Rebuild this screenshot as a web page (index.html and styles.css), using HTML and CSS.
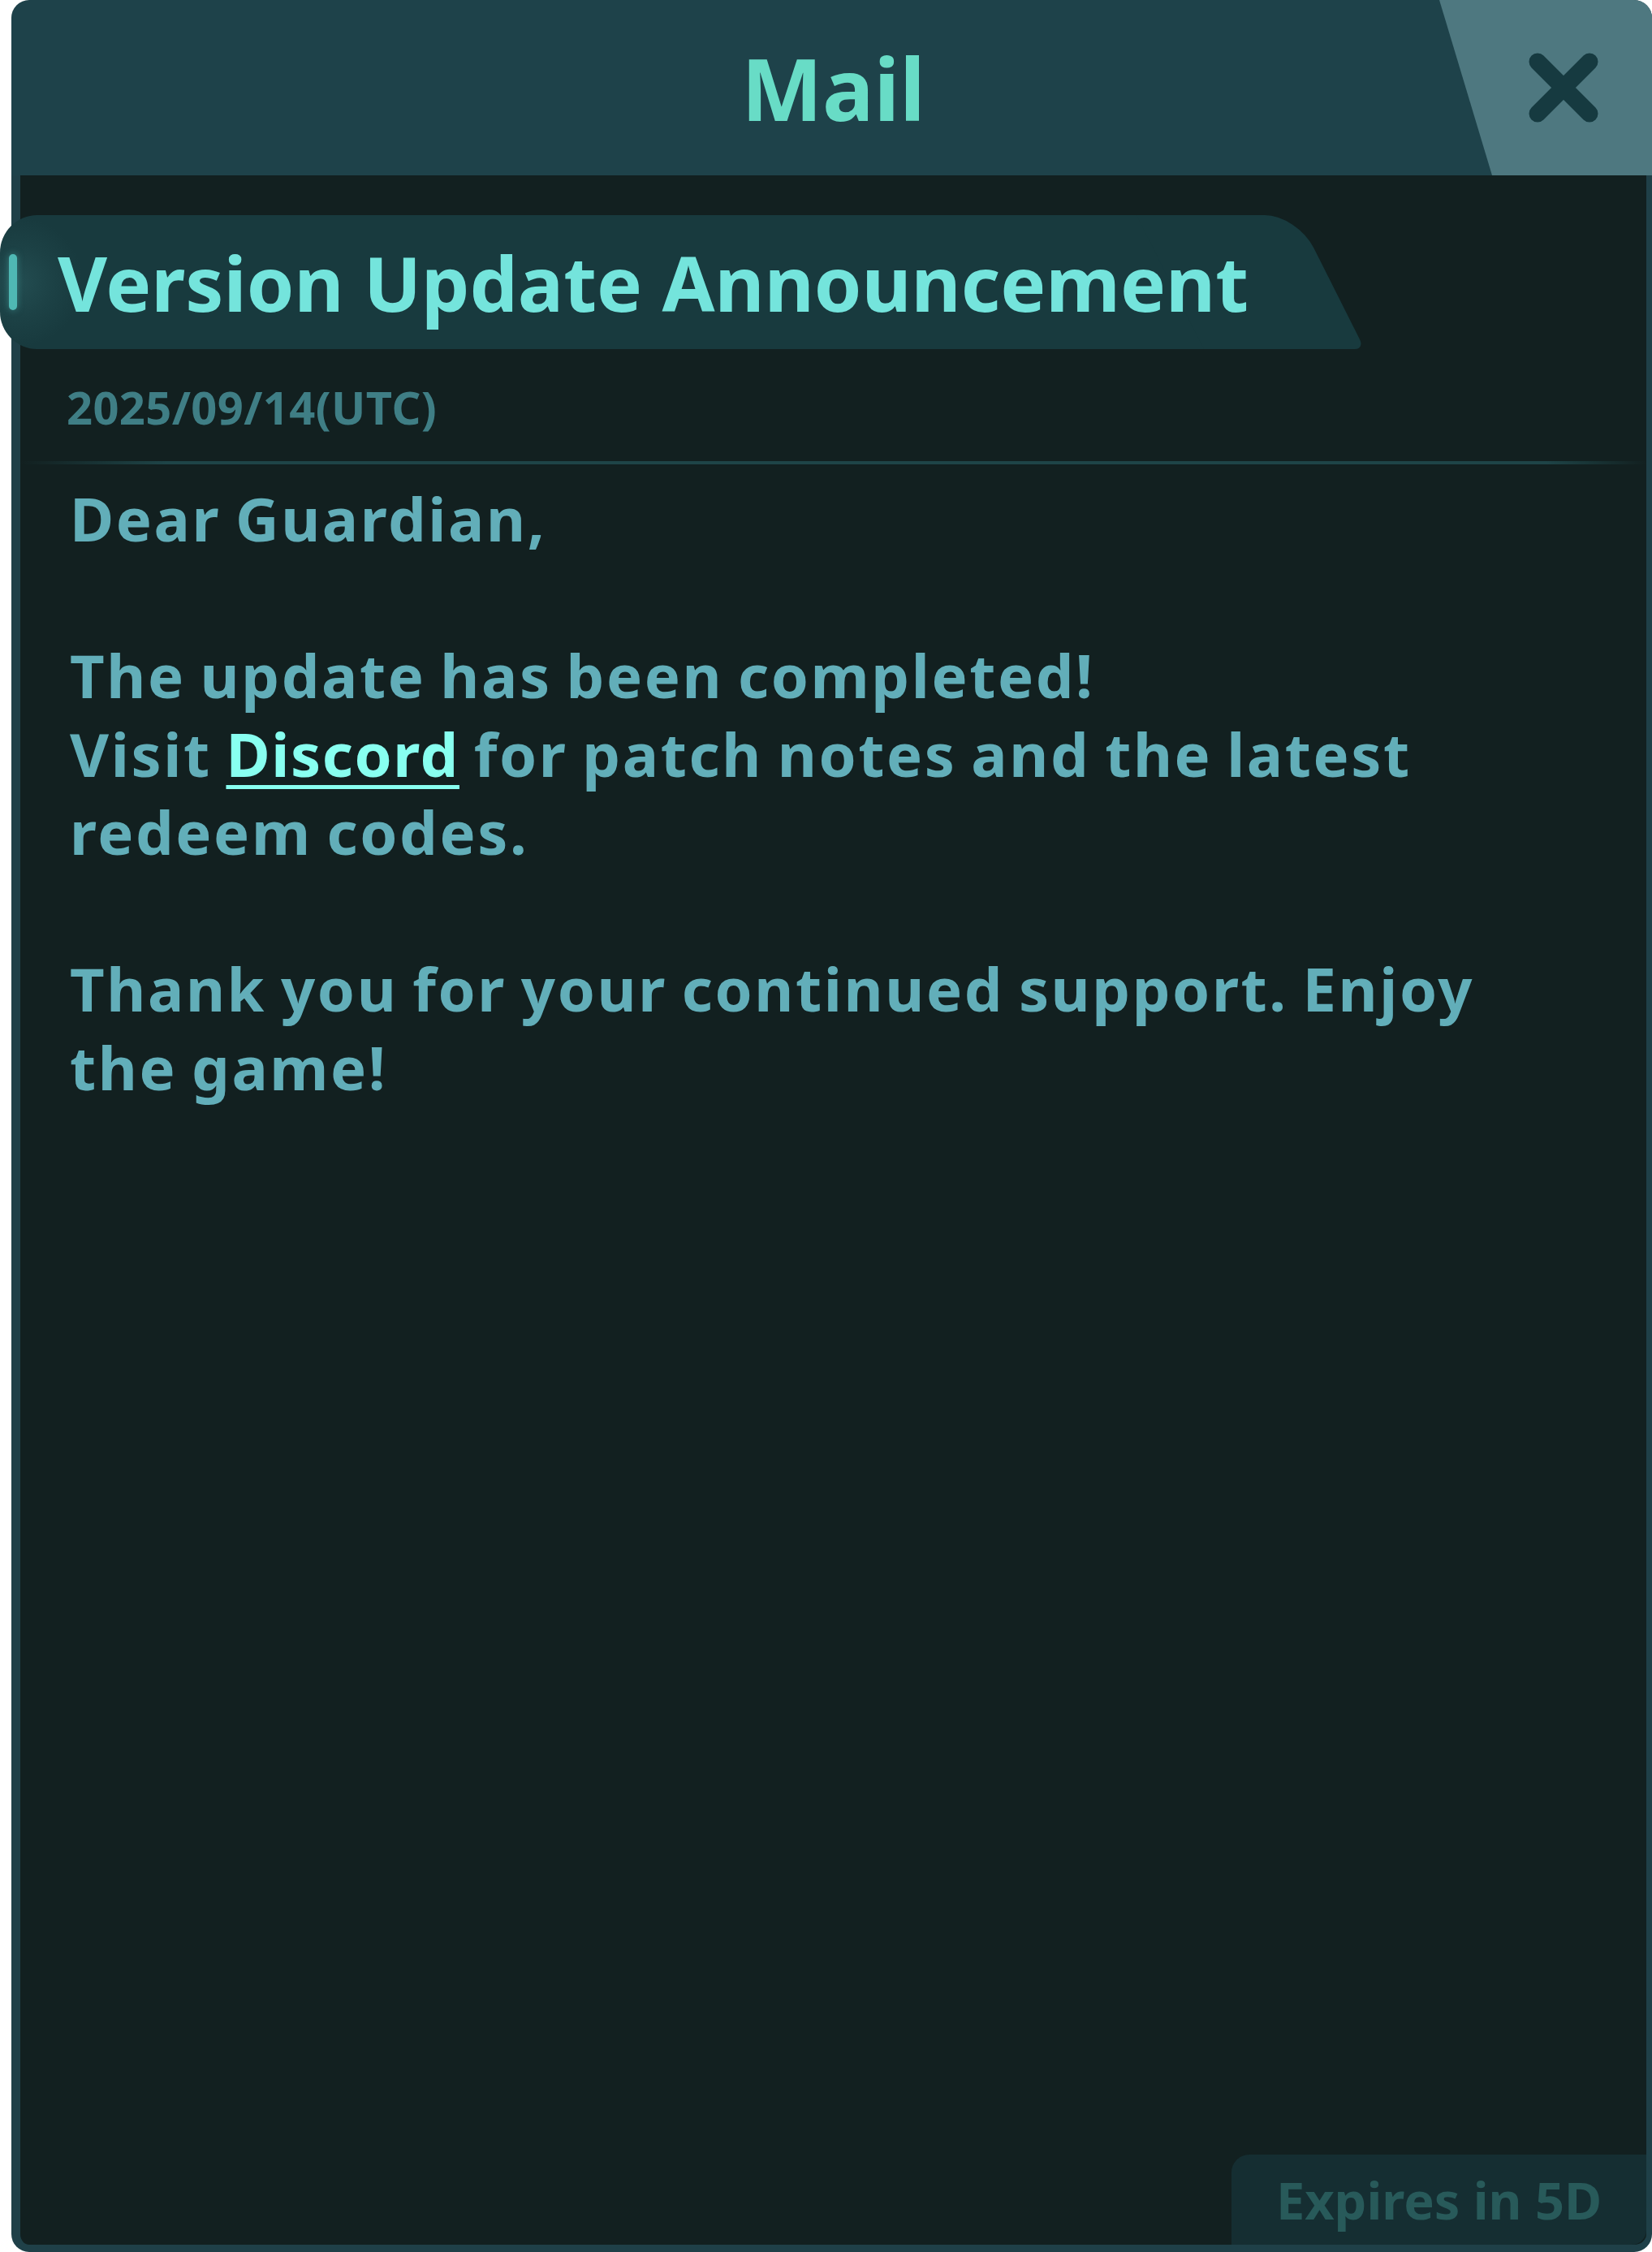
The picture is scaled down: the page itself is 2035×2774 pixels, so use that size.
FILE: index.html
```html
<!DOCTYPE html>
<html lang="en">
<head>
    <meta charset="UTF-8">
    <meta name="viewport" content="width=device-width, initial-scale=1.0">
    <title>Mail</title>
    <link rel="stylesheet" href="styles.css">
</head>
<body>
    <div class="mail">
        <header class="mail-head">
            <h1 class="mail-title">Mail</h1>
            <button class="close-btn" aria-label="Close">
                <svg width="86" height="86" viewBox="0 0 86 86">
                    <path d="M11 11 L75 75 M75 11 L11 75" stroke="#163a40" stroke-width="21" stroke-linecap="round" fill="none"/>
                </svg>
            </button>
        </header>

        <div class="mail-body">
            <div class="subject">
                <span class="subject-mark"></span>
                <h2 class="subject-text">Version Update Announcement</h2>
            </div>

            <div class="mail-date">2025/09/14(UTC)</div>
            <div class="divider"></div>

            <div class="mail-content">
                <p>Dear Guardian,</p>
                <p>The update has been completed!<br>
                Visit <a href="#" class="link">Discord</a> for patch notes and the latest redeem codes.</p>
                <p>Thank you for your continued support. Enjoy the game!</p>
            </div>

            <div class="expires">Expires in 5D</div>
        </div>
    </div>
</body>
</html>
```

FILE: styles.css
```css
:root {
    --head-bg: #1e424a;
    --body-bg: #122020;
    --frame: #1f4048;
    --tab-bg: #183a3e;
    --mint: #68dcc6;
    --text: #62aeb9;
}

body {
    margin: 0;
    background: #ffffff;
    font-family: 'Noto Sans', 'Open Sans', sans-serif;
    font-weight: 700;
}

.mail {
    margin-left: 14px;
    width: 2021px;
    height: 2774px;
    display: flex;
    flex-direction: column;
}

.mail-head {
    height: 216px;
    flex-shrink: 0;
    display: grid;
    grid-template-columns: 1fr auto 1fr;
    align-items: stretch;
    background: var(--head-bg);
    border-radius: 22px 22px 0 0;
    overflow: hidden;
}

.mail-title {
    grid-column: 2;
    margin: 0;
    padding-left: 4px;
    align-self: center;
    font-size: 106px;
    line-height: 1;
    color: var(--mint);
    font-weight: 700;
}

.close-btn {
    grid-column: 3;
    justify-self: end;
    width: 262px;
    border: none;
    padding: 0 66px 0 0;
    display: flex;
    align-items: center;
    justify-content: flex-end;
    background: #4e7880;
    clip-path: polygon(0 0, 100% 0, 100% 100%, 65px 100%);
    cursor: pointer;
}

.mail-body {
    flex: 1;
    display: flex;
    flex-direction: column;
    padding-top: 49px;
    background: var(--body-bg);
    border-left: 11px solid var(--frame);
    border-right: 7px solid var(--frame);
    border-bottom: 9px solid var(--frame);
    border-radius: 0 0 22px 22px;
}

.subject {
    position: relative;
    margin-left: -25px;
    width: 1520px;
    height: 165px;
    display: flex;
    align-items: center;
    gap: 50px;
    padding-left: 11px;
    box-sizing: border-box;
    background: radial-gradient(circle at 22px 50%, #234d51 0, #1c4145 45px, var(--tab-bg) 80px);
    border-radius: 46px 0 0 46px;
}

.subject::after {
    content: '';
    position: absolute;
    top: 0;
    left: 1400px;
    width: 198px;
    height: 100%;
    background: var(--tab-bg);
    transform: skewX(26.7deg);
    transform-origin: top;
    border-radius: 0 40px 12px 0;
}

.subject-mark {
    width: 10px;
    height: 69px;
    flex-shrink: 0;
    border-radius: 5px;
    background: #4fb8b4;
    box-shadow: 0 0 8px rgba(79, 184, 180, 0.5);
}

.subject-text {
    position: relative;
    z-index: 1;
    margin: 0;
    font-size: 94px;
    line-height: 1;
    color: #74e4dc;
    font-weight: 700;
    white-space: nowrap;
}

.mail-date {
    margin-top: 37px;
    padding-left: 57px;
    font-size: 56px;
    line-height: 68px;
    letter-spacing: 0.4px;
    color: #3f7e85;
}

.divider {
    margin-top: 33px;
    height: 4px;
    background: linear-gradient(to right, rgba(30, 68, 71, 0) 0, #1e4447 180px, #1e4447 1880px, rgba(30, 68, 71, 0) 100%);
}

.mail-content {
    flex: 1;
    margin-top: 19px;
    padding: 0 90px 0 61px;
    font-size: 74px;
    line-height: 96.5px;
    letter-spacing: 2.6px;
    word-spacing: -4px;
    color: var(--text);
}

.mail-content p {
    margin: 0 0 96.5px;
}

.link {
    color: #88fff0;
    letter-spacing: 1.6px;
    text-decoration: underline;
    text-decoration-thickness: 5px;
    text-underline-offset: 10px;
}

.expires {
    align-self: flex-end;
    width: 511px;
    height: 111px;
    display: flex;
    align-items: center;
    justify-content: center;
    background: #152e32;
    border-radius: 22px 0 18px 0;
    font-size: 63px;
    color: #285a5a;
}
```
